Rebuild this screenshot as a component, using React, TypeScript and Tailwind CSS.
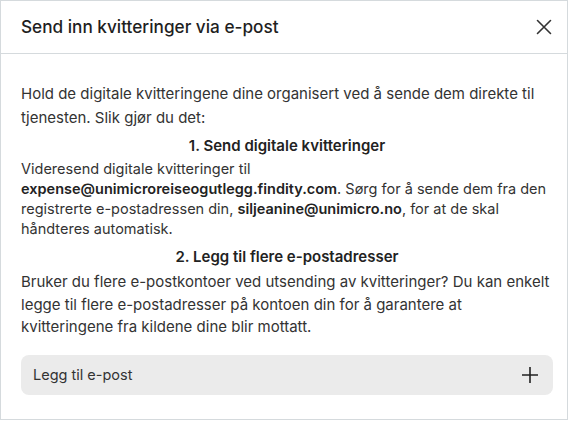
import React from "react";

export default function App() {
  return (
    <div className="w-[570px] h-[421px] bg-white" style={{ fontFamily: "Inter, 'Noto Sans', sans-serif" }}>
      <div className="w-[568px] h-[420px] border border-[#d5dadd] bg-white flex flex-col">
        <div className="h-[53px] shrink-0 border-b border-[#d5dadd] flex items-center justify-between pl-[20px] pr-[15px]">
          <h2 className="text-[17.2px] font-medium text-[#1f1f1f]">Send inn kvitteringer via e-post</h2>
          <svg width="16" height="16" viewBox="0 0 16 16" fill="none" stroke="#333" strokeWidth="1.6" strokeLinecap="round">
            <path d="M1.5 1.5L14.5 14.5M14.5 1.5L1.5 14.5" />
          </svg>
        </div>
        <div className="pl-[20px] pr-[14px] pt-[28px] text-[#333]">
          <p className="text-[15px] leading-[24px]">
            Hold de digitale kvitteringene dine organisert ved å sende dem direkte til tjenesten. Slik gjør du det:
          </p>
          <h3 className="mt-[4px] text-center text-[15px] leading-[24px] font-semibold text-[#222]">1. Send digitale kvitteringer</h3>
          <p className="mt-[1px] text-[14.5px] leading-[20px]">
            Videresend digitale kvitteringer til <b className="font-semibold text-[#222]">expense@unimicroreiseogutlegg.findity.com</b>. Sørg for å sende dem fra den registrerte e-postadressen din, <b className="font-semibold text-[#222]">siljeanine@unimicro.no</b>, for at de skal håndteres automatisk.
          </p>
          <h3 className="mt-[6px] text-center text-[15px] leading-[24px] font-semibold text-[#222]">2. Legg til flere e-postadresser</h3>
          <p className="mt-[2px] text-[15px] leading-[22.5px]">
            Bruker du flere e-postkontoer ved utsending av kvitteringer? Du kan enkelt legge til flere e-postadresser på kontoen din for å garantere at kvitteringene fra kildene dine blir mottatt.
          </p>
          <div className="mt-[16px] h-[40px] rounded-[8px] bg-[#ebebeb] flex items-center justify-between pl-[12px] pr-[15px]">
            <span className="text-[14.5px] text-[#333]">Legg til e-post</span>
            <svg width="16" height="16" viewBox="0 0 16 16" fill="none" stroke="#222" strokeWidth="1.6">
              <path d="M8 0V16M0 8H16" />
            </svg>
          </div>
        </div>
      </div>
    </div>
  );
}
